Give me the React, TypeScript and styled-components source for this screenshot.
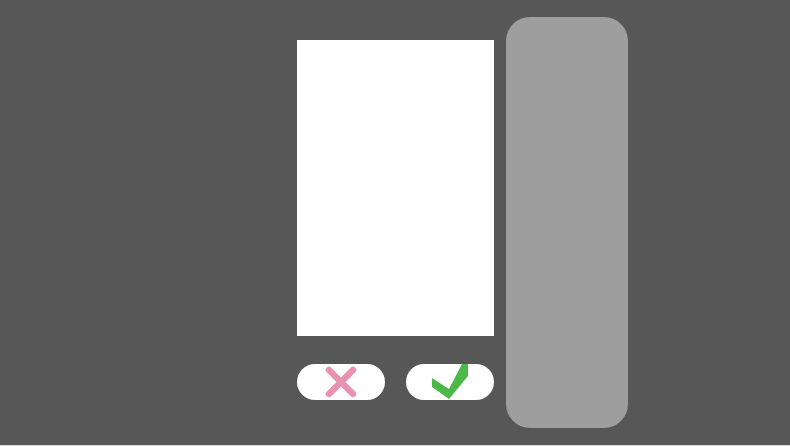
import React from "react";
import styled, { createGlobalStyle } from "styled-components";

const GlobalStyle = createGlobalStyle`
  html, body {
    margin: 0;
    padding: 0;
    background: #dcdcdc;
    font-family: "Liberation Sans", Arial, sans-serif;
  }
`;

const Stage = styled.div`
  width: 790px;
  height: 445px;
  background: #575757;
  display: flex;
  align-items: flex-start;
  gap: 12px;
  padding: 17px 0 0 297px;
  box-sizing: border-box;
`;

const Column = styled.div`
  width: 197px;
  margin-top: 23px;
  display: flex;
  flex-direction: column;
  gap: 28px;
`;

const Sheet = styled.div`
  width: 197px;
  height: 296px;
  background: #ffffff;
`;

const Actions = styled.div`
  display: flex;
  justify-content: space-between;
`;

const PillButton = styled.button`
  width: 88px;
  height: 36px;
  border: none;
  border-radius: 18px;
  background: #ffffff;
  padding: 0;
  display: flex;
  align-items: center;
  justify-content: center;
  cursor: pointer;
`;

const SidePanel = styled.div`
  width: 122px;
  height: 411px;
  border-radius: 24px;
  background: #9e9e9e;
`;

const CrossIcon = () => (
  <svg width="36" height="36" viewBox="0 0 36 36">
    <path
      d="M6 6 L30 30 M30 6 L6 30"
      stroke="#e892b0"
      strokeWidth="6.5"
      strokeLinecap="round"
    />
  </svg>
);

const CheckIcon = () => (
  <svg width="36" height="36" viewBox="0 0 36 36">
    <polygon
      points="0,14 17,25 30,0 36,0 36,12 17,35 0,23"
      fill="#4cb848"
    />
  </svg>
);

export default function App() {
  return (
    <>
      <GlobalStyle />
      <Stage>
        <Column>
          <Sheet />
          <Actions>
            <PillButton aria-label="cancel">
              <CrossIcon />
            </PillButton>
            <PillButton aria-label="confirm">
              <CheckIcon />
            </PillButton>
          </Actions>
        </Column>
        <SidePanel />
      </Stage>
    </>
  );
}
